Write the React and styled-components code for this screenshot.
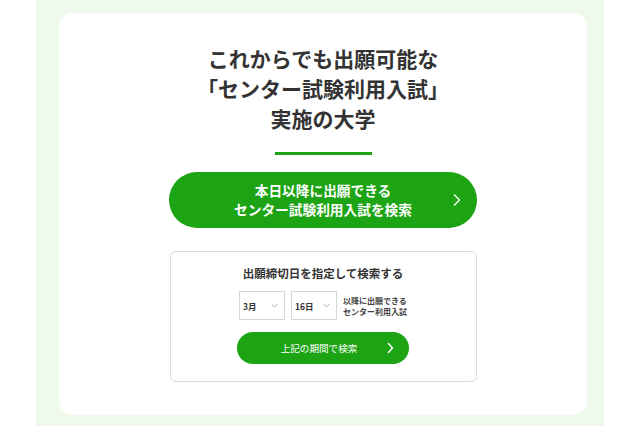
import React from "react";
import styled, { createGlobalStyle } from "styled-components";

const GlobalStyle = createGlobalStyle`
  html, body {
    margin: 0;
    padding: 0;
    background: #fff;
    font-family: "Noto Sans CJK JP", "Noto Sans", sans-serif;
    color: #333;
  }
`;

const Band = styled.div`
  width: 568px;
  margin: 0 auto;
  padding: 13px 17px 14px 23px;
  box-sizing: border-box;
  background: #effaed;
  min-height: 426px;
`;

const Card = styled.div`
  background: #fff;
  border-radius: 14px;
  padding: 30px 0 33px;
  display: flex;
  flex-direction: column;
  align-items: center;
`;

const Title = styled.h1`
  margin: 0;
  font-size: 21px;
  line-height: 30px;
  font-weight: 700;
  text-align: center;
  color: #333;
`;

const Divider = styled.div`
  width: 97px;
  height: 3px;
  background: #1ca414;
  margin-top: 19px;
`;

const PillButton = styled.button`
  display: flex;
  align-items: center;
  justify-content: center;
  position: relative;
  width: ${(p) => p.$w}px;
  height: ${(p) => p.$h}px;
  margin-top: ${(p) => p.$mt}px;
  border: none;
  border-radius: 999px;
  background: #1ca414;
  color: #fff;
  font-family: inherit;
  font-size: ${(p) => p.$fs}px;
  font-weight: ${(p) => (p.$bold ? 700 : 400)};
  line-height: 19px;
  padding: 0;
  cursor: pointer;
`;

const ButtonLabel = styled.span`
  text-align: center;
  transform: translateX(${(p) => p.$shift || 0}px);
`;

const Arrow = styled.svg`
  position: absolute;
  right: ${(p) => p.$right}px;
  top: 50%;
  transform: translateY(-50%);
`;

const SearchBox = styled.div`
  width: 307px;
  margin-top: 23px;
  border: 1px solid #dcdcdc;
  border-radius: 6px;
  box-sizing: border-box;
  padding: 13px 0 17px;
  display: flex;
  flex-direction: column;
  align-items: center;
`;

const BoxTitle = styled.div`
  font-size: 11.5px;
  font-weight: 700;
  line-height: 16px;
`;

const SelectRow = styled.div`
  display: flex;
  align-items: center;
  gap: 6px;
  margin-top: 10px;
`;

const Select = styled.div`
  width: 46px;
  height: 29px;
  border: 1px solid #d6d6d6;
  box-sizing: border-box;
  display: flex;
  align-items: center;
  justify-content: space-between;
  padding: 0 6px 0 3px;
  font-size: 8.5px;
  font-weight: 700;
`;

const Note = styled.div`
  font-size: 8px;
  line-height: 11px;
  font-weight: 700;
  color: #444;
`;

function Chevron({ w, h, right, stroke = 1.4 }) {
  return (
    <Arrow $right={right} width={w} height={h} viewBox={`0 0 ${w} ${h}`}>
      <polyline
        points={`1,1 ${w - 1.5},${h / 2} 1,${h - 1}`}
        fill="none"
        stroke="#fff"
        strokeWidth={stroke}
      />
    </Arrow>
  );
}

function SmallChevron() {
  return (
    <svg width="7" height="5" viewBox="0 0 7 5">
      <polyline points="0.5,0.8 3.5,4 6.5,0.8" fill="none" stroke="#999" strokeWidth="0.8" />
    </svg>
  );
}

export default function App() {
  return (
    <>
      <GlobalStyle />
      <Band>
        <Card>
          <Title>
            これからでも出願可能な
            <br />
            「センター試験利用入試」
            <br />
            実施の大学
          </Title>
          <Divider />
          <PillButton $w={308} $h={56} $mt={17} $fs={13.7} $bold>
            <ButtonLabel>
              本日以降に出願できる
              <br />
              センター試験利用入試を検索
            </ButtonLabel>
            <Chevron w={8} h={13} right={16} />
          </PillButton>
          <SearchBox>
            <BoxTitle>出願締切日を指定して検索する</BoxTitle>
            <SelectRow>
              <Select>
                3月
                <SmallChevron />
              </Select>
              <Select>
                16日
                <SmallChevron />
              </Select>
              <Note>
                以降に出願できる
                <br />
                センター利用入試
              </Note>
            </SelectRow>
            <PillButton $w={172} $h={32} $mt={12} $fs={9.6}>
              <ButtonLabel $shift={-4}>上記の期間で検索</ButtonLabel>
              <Chevron w={7} h={12} right={15} />
            </PillButton>
          </SearchBox>
        </Card>
      </Band>
    </>
  );
}
